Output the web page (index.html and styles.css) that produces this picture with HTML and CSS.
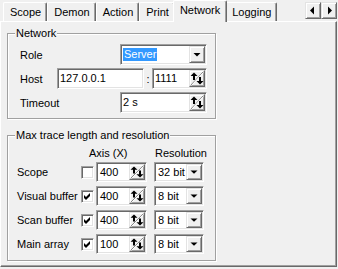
FILE: index.html
```html
<!DOCTYPE html>
<html lang="en">
<head>
  <meta charset="UTF-8" />
  <title>Settings - Network</title>
  <link rel="stylesheet" href="styles.css">
</head>
<body>
  <div class="tabstrip">
    <div class="tab">Scope</div>
    <div class="tab">Demon</div>
    <div class="tab">Action</div>
    <div class="tab">Print</div>
    <div class="tab active">Network</div>
    <div class="tab">Logging</div>
    <div class="tab-scroll">
      <div class="btn3d scroll-btn"><svg viewBox="0 0 14 15"><path d="M8 3.5v8l-4-4z"/></svg></div>
      <div class="btn3d scroll-btn"><svg viewBox="0 0 14 15"><path d="M6 3.5v8l4-4z"/></svg></div>
    </div>
  </div>

  <div class="panel">
    <div class="group group-network">
      <span class="group-title">Network</span>

      <div class="form-row">
        <span class="label w-wide">Role</span>
        <div class="field w87">
          <span class="selected">Server</span>
          <span class="btn3d drop"><svg viewBox="0 0 14 15" preserveAspectRatio="none"><path d="M3.5 6h7L7 9.5z"/></svg></span>
        </div>
      </div>

      <div class="form-row">
        <span class="label w-host">Host</span>
        <div class="field w87"><span class="value">127.0.0.1</span></div>
        <span class="colon">:</span>
        <div class="field w55">
          <span class="value">1111</span>
          <span class="btn3d spin"><svg viewBox="0 0 14 15" preserveAspectRatio="none"><path d="M0.5 14.5 13.5 0.5" stroke="#808080" fill="none"/><path d="M1.5 14.5 13.5 1.5" stroke="#fff" fill="none"/><path d="M4 1.5 7.5 5h-7z M3 5h2v4H3z M10 13.5 6.5 10h7z M9 6h2v4H9z"/></svg></span>
        </div>
      </div>

      <div class="form-row">
        <span class="label w-wide">Timeout</span>
        <div class="field w87">
          <span class="value">2 s</span>
          <span class="btn3d spin"><svg viewBox="0 0 14 15" preserveAspectRatio="none"><path d="M0.5 14.5 13.5 0.5" stroke="#808080" fill="none"/><path d="M1.5 14.5 13.5 1.5" stroke="#fff" fill="none"/><path d="M4 1.5 7.5 5h-7z M3 5h2v4H3z M10 13.5 6.5 10h7z M9 6h2v4H9z"/></svg></span>
        </div>
      </div>
    </div>

    <div class="group group-trace">
      <span class="group-title">Max trace length and resolution</span>

      <div class="trace-head">
        <span class="head-axis">Axis (X)</span>
        <span>Resolution</span>
      </div>

      <div class="trace-row">
        <span>Scope</span>
        <span class="check"></span>
        <div class="field small">
          <span class="value">400</span>
          <span class="btn3d spin"><svg viewBox="0 0 14 15" preserveAspectRatio="none"><path d="M0.5 14.5 13.5 0.5" stroke="#808080" fill="none"/><path d="M1.5 14.5 13.5 1.5" stroke="#fff" fill="none"/><path d="M4 1.5 7.5 5h-7z M3 5h2v4H3z M10 13.5 6.5 10h7z M9 6h2v4H9z"/></svg></span>
        </div>
        <div class="field small">
          <span class="value">32 bit</span>
          <span class="btn3d drop"><svg viewBox="0 0 14 15" preserveAspectRatio="none"><path d="M3.5 6h7L7 9.5z"/></svg></span>
        </div>
      </div>

      <div class="trace-row">
        <span>Visual buffer</span>
        <span class="check"><svg viewBox="0 0 9 9"><path d="M1 3l2 2 4-4v3L3 8 1 6z"/></svg></span>
        <div class="field small">
          <span class="value">400</span>
          <span class="btn3d spin"><svg viewBox="0 0 14 15" preserveAspectRatio="none"><path d="M0.5 14.5 13.5 0.5" stroke="#808080" fill="none"/><path d="M1.5 14.5 13.5 1.5" stroke="#fff" fill="none"/><path d="M4 1.5 7.5 5h-7z M3 5h2v4H3z M10 13.5 6.5 10h7z M9 6h2v4H9z"/></svg></span>
        </div>
        <div class="field small">
          <span class="value">8 bit</span>
          <span class="btn3d drop"><svg viewBox="0 0 14 15" preserveAspectRatio="none"><path d="M3.5 6h7L7 9.5z"/></svg></span>
        </div>
      </div>

      <div class="trace-row">
        <span>Scan buffer</span>
        <span class="check"><svg viewBox="0 0 9 9"><path d="M1 3l2 2 4-4v3L3 8 1 6z"/></svg></span>
        <div class="field small">
          <span class="value">400</span>
          <span class="btn3d spin"><svg viewBox="0 0 14 15" preserveAspectRatio="none"><path d="M0.5 14.5 13.5 0.5" stroke="#808080" fill="none"/><path d="M1.5 14.5 13.5 1.5" stroke="#fff" fill="none"/><path d="M4 1.5 7.5 5h-7z M3 5h2v4H3z M10 13.5 6.5 10h7z M9 6h2v4H9z"/></svg></span>
        </div>
        <div class="field small">
          <span class="value">8 bit</span>
          <span class="btn3d drop"><svg viewBox="0 0 14 15" preserveAspectRatio="none"><path d="M3.5 6h7L7 9.5z"/></svg></span>
        </div>
      </div>

      <div class="trace-row">
        <span>Main array</span>
        <span class="check"><svg viewBox="0 0 9 9"><path d="M1 3l2 2 4-4v3L3 8 1 6z"/></svg></span>
        <div class="field small">
          <span class="value">100</span>
          <span class="btn3d spin"><svg viewBox="0 0 14 15" preserveAspectRatio="none"><path d="M0.5 14.5 13.5 0.5" stroke="#808080" fill="none"/><path d="M1.5 14.5 13.5 1.5" stroke="#fff" fill="none"/><path d="M4 1.5 7.5 5h-7z M3 5h2v4H3z M10 13.5 6.5 10h7z M9 6h2v4H9z"/></svg></span>
        </div>
        <div class="field small">
          <span class="value">8 bit</span>
          <span class="btn3d drop"><svg viewBox="0 0 14 15" preserveAspectRatio="none"><path d="M3.5 6h7L7 9.5z"/></svg></span>
        </div>
      </div>
    </div>
  </div>
</body>
</html>
```

FILE: styles.css
```css
* {
  box-sizing: border-box;
}

body {
  margin: 0;
  background: #f0f0f0;
  font: 11px "Liberation Sans", Arial, sans-serif;
  color: #000;
}

/* tab strip */
.tabstrip {
  display: flex;
  align-items: flex-end;
  height: 21px;
  padding-left: 3px;
}

.tab {
  height: 19px;
  padding: 2px 5px 0 6px;
  line-height: 15px;
  border: 1px solid;
  border-color: #fff #696969 transparent #fff;
  border-bottom: none;
  border-radius: 2px 2px 0 0;
  box-shadow: inset -1px 0 0 #a0a0a0;
}

.tab.active {
  position: relative;
  z-index: 1;
  height: 22px;
  margin: 0 -2px -1px;
  padding: 2px 6px 0;
  background: #f0f0f0;
}

.tab-scroll {
  display: flex;
  align-self: flex-start;
  margin: 2px 1px 0 auto;
}

.scroll-btn {
  width: 16px;
  height: 17px;
}

/* 3d bits */
.btn3d {
  display: block;
  background: #f0f0f0;
  border: 1px solid;
  border-color: #e3e3e3 #696969 #696969 #e3e3e3;
  box-shadow: inset 1px 1px 0 #fff, inset -1px -1px 0 #a0a0a0;
}

.btn3d svg {
  display: block;
  width: 14px;
  height: 100%;
}

.field {
  display: flex;
  height: 21px;
  padding: 1px;
  background: #fff;
  border: 1px solid;
  border-color: #a0a0a0 #fff #fff #a0a0a0;
  box-shadow: inset 1px 1px 0 #696969, inset -1px -1px 0 #e3e3e3;
}

.field .value {
  flex: 1;
  padding-left: 1px;
  line-height: 17px;
  white-space: nowrap;
}

.field .selected {
  align-self: flex-start;
  height: 13px;
  margin: 2px auto 0 1px;
  padding: 0 1px;
  line-height: 13px;
  background: #3399ff;
  color: #fff;
}

.drop,
.spin {
  width: 16px;
  flex: none;
}

/* panel and groups */
.panel {
  width: 337px;
  height: 246px;
  padding: 11px 0 0 6px;
  border: 1px solid;
  border-color: #fff #696969 #696969 #fff;
  box-shadow: inset -1px -1px 0 #a0a0a0;
}

.group {
  position: relative;
  width: 209px;
  border: 1px solid #a0a0a0;
  box-shadow: 1px 1px 0 #fff, inset 1px 1px 0 #fff;
}

.group-title {
  position: absolute;
  top: -7px;
  left: 7px;
  padding: 0 1px;
  line-height: 13px;
  background: #f0f0f0;
}

.group-network {
  padding: 10px 0 5px 12px;
}

.form-row {
  display: flex;
  align-items: center;
  height: 21px;
}

.form-row + .form-row {
  margin-top: 3px;
}

.w-wide {
  width: 100px;
}

.w-host {
  width: 37px;
}

.w87 {
  width: 87px;
}

.w55 {
  width: 55px;
}

.colon {
  width: 8px;
  text-align: center;
}

.group-trace {
  margin-top: 16px;
  padding: 10px 0 6px 9px;
}

.trace-head {
  display: flex;
  height: 16px;
  padding-left: 72px;
  line-height: 15px;
}

.head-axis {
  width: 66px;
}

.trace-row {
  display: grid;
  grid-template-columns: 64px 15px 58px 50px;
  align-items: center;
  height: 20px;
}

.trace-row + .trace-row {
  margin-top: 4px;
}

.field.small {
  width: 51px;
  height: 20px;
}

.field.small .value {
  padding-left: 2px;
  line-height: 16px;
}

.trace-row .field.small:last-child {
  width: 50px;
}

.check {
  display: block;
  width: 13px;
  height: 13px;
  padding: 1px;
  background: #fff;
  border: 1px solid;
  border-color: #a0a0a0 #fff #fff #a0a0a0;
  box-shadow: inset 1px 1px 0 #696969, inset -1px -1px 0 #e3e3e3;
}

.check svg {
  display: block;
  width: 9px;
  height: 9px;
}
```
